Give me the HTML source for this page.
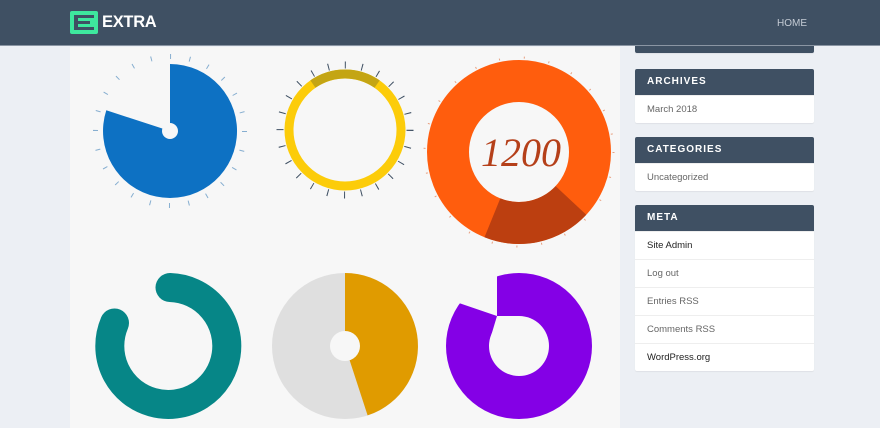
<!DOCTYPE html>
<html><head><meta charset="utf-8"><style>
*{margin:0;padding:0;box-sizing:border-box}
body{width:880px;height:428px;overflow:hidden;background:#eceff4;font-family:"Liberation Sans",sans-serif;position:relative}
.hdr{position:absolute;left:0;top:0;width:880px;height:46px;background:#3f5063;border-bottom:1px solid #8a95a3}
.logo{position:absolute;left:70px;top:11px;width:28px;height:23px;background:#3ee89e;border-radius:2px}
.logo i{position:absolute;background:#3f5063}
.brand{position:absolute;left:102px;top:13px;color:#fff;font-weight:bold;font-size:16.5px;letter-spacing:-0.3px}
.home{position:absolute;left:777px;top:18px;color:#c5ccd5;font-size:10px}
.panel{position:absolute;left:70px;top:47px;width:550px;height:381px;background:#f7f7f7}
.w{position:absolute;left:635px;width:179px;background:#fff;border-radius:2px;box-shadow:0 1px 1px rgba(0,0,0,.06)}
.wh{background:#3f5063;color:#fff;font-weight:bold;font-size:10px;letter-spacing:1px;height:26px;line-height:26px;padding-left:12px;border-radius:2px 2px 0 0}
.wi{height:28px;line-height:28px;padding-left:12px;font-size:9.5px;color:#666;border-top:1px solid #eee}
.wi:first-of-type{border-top:none}
.dk{color:#222}
svg{position:absolute;left:0;top:0}
</style></head><body>
<div class="hdr">
<div class="logo"><i style="left:4px;top:4px;width:4px;height:15px"></i><i style="left:4px;top:4px;width:20px;height:3px"></i><i style="left:4px;top:10px;width:16px;height:3px"></i><i style="left:4px;top:16px;width:20px;height:3px"></i></div>
<div class="brand">EXTRA</div>
<div class="home">HOME</div>
</div>
<div class="panel"></div>
<div class="w" style="top:46px;height:7px;background:#3f5063;border-radius:0 0 2px 2px"></div>
<div class="w" style="top:69px"><div class="wh">ARCHIVES</div><div class="wi">March 2018</div></div>
<div class="w" style="top:137px"><div class="wh">CATEGORIES</div><div class="wi">Uncategorized</div></div>
<div class="w" style="top:205px"><div class="wh">META</div>
<div class="wi dk">Site Admin</div><div class="wi">Log out</div><div class="wi">Entries RSS</div><div class="wi">Comments RSS</div><div class="wi dk">WordPress.org</div></div>
<svg width="880" height="428" viewBox="0 0 880 428">
<circle cx="170" cy="131" r="74.5" fill="none" stroke="#86aed0" stroke-width="5" stroke-dasharray="1 18.5"/>
<path d="M170,131 L170,64 A67,67 0 1 1 106.3,110.3 Z" fill="#0d71c3"/>
<circle cx="170" cy="131" r="8" fill="#f7f7f7"/>
<circle cx="345" cy="130" r="65" fill="none" stroke="#3f5063" stroke-width="7" stroke-dasharray="1 16"/>
<circle cx="345" cy="130" r="56" fill="none" stroke="#fccc0a" stroke-width="9"/>
<path d="M312.9,84.1 A56 56 0 0 1 377.1,84.1" fill="none" stroke="#c4a514" stroke-width="9"/>
<circle cx="519" cy="152" r="94.5" fill="none" stroke="#e8a080" stroke-width="2" stroke-dasharray="1 24"/>
<circle cx="519" cy="152" r="71" fill="none" stroke="#ff5d0d" stroke-width="42"/>
<path d="M586.3,214.7 A92 92 0 0 1 484.5,237.3 L500.3,198.4 A50 50 0 0 0 555.6,186.1 Z" fill="#bc3f10"/>
<text x="521" y="166" text-anchor="middle" font-family="Liberation Serif,serif" font-style="italic" font-size="40" fill="#b5401a">1200</text>
<path d="M170,287.5 A58.5 58.5 0 1 1 114.5,323" fill="none" stroke="#068687" stroke-width="29" stroke-linecap="round"/>
<circle cx="345" cy="346" r="73" fill="#dfdfdf"/>
<path d="M345,346 L345,273 A73 73 0 0 1 367.6,415.4 Z" fill="#e09b00"/>
<circle cx="345" cy="346" r="15" fill="#f7f7f7"/>
<circle cx="519" cy="346" r="73" fill="#8400e6"/>
<polygon points="497,260 497,316 456,302 430,295 430,260" fill="#f7f7f7"/>
<circle cx="519" cy="346" r="30" fill="#f7f7f7"/>
<polygon points="497,316 519,316 519,346 489,346 491,336" fill="#f7f7f7"/>
</svg>
</body></html>
